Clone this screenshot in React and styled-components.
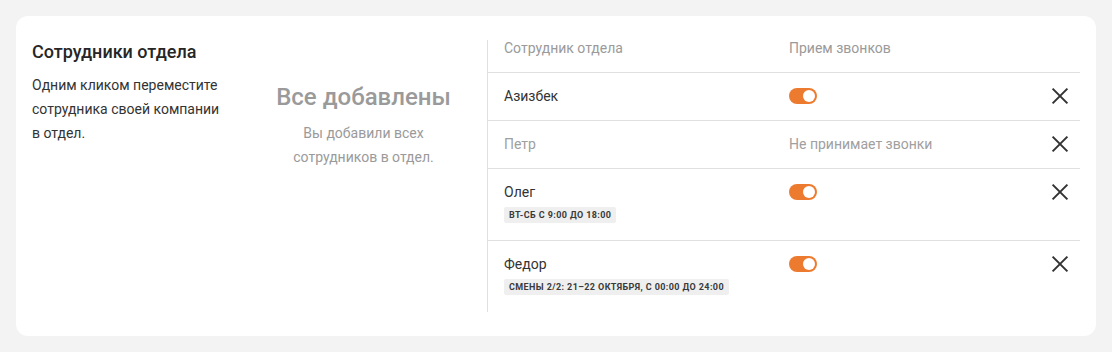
import React from "react";
import styled, { createGlobalStyle } from "styled-components";

const Global = createGlobalStyle`
  html, body { margin: 0; padding: 0; background: #f2f3f2; }
  body { font-family: Roboto, "Noto Sans", Arial, sans-serif; color: #333; }
  * { box-sizing: border-box; }
`;

const Page = styled.div`
  padding: 16px;
`;

const Card = styled.section`
  background: #fff;
  border-radius: 12px;
  padding: 24px 16px;
  display: grid;
  grid-template-columns: 208px 1fr 593px;
  align-items: start;
`;

const Intro = styled.div`
  display: flex;
  flex-direction: column;
`;

const Title = styled.h2`
  margin: 0 0 9px;
  font-size: 18px;
  line-height: 24px;
  font-weight: 500;
  color: #262626;
`;

const Description = styled.p`
  margin: 0;
  font-size: 14px;
  line-height: 24px;
  color: #333;
`;

const Empty = styled.div`
  padding-top: 41px;
  text-align: center;
`;

const EmptyTitle = styled.div`
  font-size: 24px;
  line-height: 32px;
  font-weight: 500;
  color: #9a9a9a;
`;

const EmptyText = styled.div`
  margin-top: 8px;
  font-size: 14px;
  line-height: 24px;
  color: #9a9a9a;
`;

const Table = styled.div`
  border-left: 1px solid #e0e0e0;
  display: flex;
  flex-direction: column;
`;

const Row = styled.div`
  display: grid;
  grid-template-columns: 285px 1fr 24px;
  align-items: start;
  padding: ${(p) => (p.$head ? "0 8px 0 16px" : "13px 8px 14px 16px")};
  height: ${(p) => (p.$head ? "33px" : "auto")};
  border-bottom: ${(p) => (p.$last ? "none" : "1px solid #e0e0e0")};
`;

const HeadCell = styled.div`
  font-size: 14px;
  line-height: 16px;
  color: #9a9a9a;
`;

const NameCell = styled.div`
  display: flex;
  flex-direction: column;
  align-items: flex-start;
`;

const Name = styled.div`
  font-size: 14px;
  line-height: 20px;
  color: ${(p) => (p.$muted ? "#a0a0a0" : "#333")};
`;

const Badge = styled.span`
  margin: 5px 0 3px;
  height: 16px;
  padding: 0 5px;
  display: inline-flex;
  align-items: center;
  background: #efefef;
  border-radius: 2px;
  font-size: 9px;
  font-weight: 700;
  letter-spacing: 0.4px;
  text-transform: uppercase;
  color: #3a3a3a;
  white-space: nowrap;
`;

const CallCell = styled.div`
  height: 20px;
  display: flex;
  align-items: center;
  font-size: 14px;
  color: #a0a0a0;
`;

const Toggle = styled.span`
  position: relative;
  width: 28px;
  height: 16px;
  border-radius: 8px;
  background: #ed7b2f;
  &::after {
    content: "";
    position: absolute;
    top: 2px;
    right: 2px;
    width: 12px;
    height: 12px;
    border-radius: 50%;
    background: #fff;
  }
`;

const Remove = styled.button`
  width: 24px;
  height: 20px;
  padding: 0;
  border: 0;
  background: none;
  display: flex;
  align-items: center;
  justify-content: center;
  cursor: pointer;
`;

const CloseIcon = () => (
  <svg width="24" height="24" viewBox="0 0 24 24" fill="none">
    <path d="M4.6 4.6L19.4 19.4M19.4 4.6L4.6 19.4" stroke="#333" strokeWidth="2" />
  </svg>
);

const people = [
  { name: "Азизбек", on: true },
  { name: "Петр", on: false },
  { name: "Олег", on: true, badge: "ВТ-СБ С 9:00 ДО 18:00" },
  { name: "Федор", on: true, badge: "Смены 2/2: 21–22 октября, с 00:00 до 24:00" },
];

export default function App() {
  return (
    <Page>
      <Global />
      <Card>
        <Intro>
          <Title>Сотрудники отдела</Title>
          <Description>
            Одним кликом переместите
            <br />
            сотрудника своей компании
            <br />в отдел.
          </Description>
        </Intro>
        <Empty>
          <EmptyTitle>Все добавлены</EmptyTitle>
          <EmptyText>
            Вы добавили всех
            <br />
            сотрудников в отдел.
          </EmptyText>
        </Empty>
        <Table>
          <Row $head>
            <HeadCell>Сотрудник отдела</HeadCell>
            <HeadCell>Прием звонков</HeadCell>
            <span />
          </Row>
          {people.map((p, i) => (
            <Row key={p.name} $last={i === people.length - 1}>
              <NameCell>
                <Name $muted={!p.on}>{p.name}</Name>
                {p.badge && <Badge>{p.badge}</Badge>}
              </NameCell>
              <CallCell>{p.on ? <Toggle /> : "Не принимает звонки"}</CallCell>
              <Remove aria-label="Удалить">
                <CloseIcon />
              </Remove>
            </Row>
          ))}
        </Table>
      </Card>
    </Page>
  );
}
